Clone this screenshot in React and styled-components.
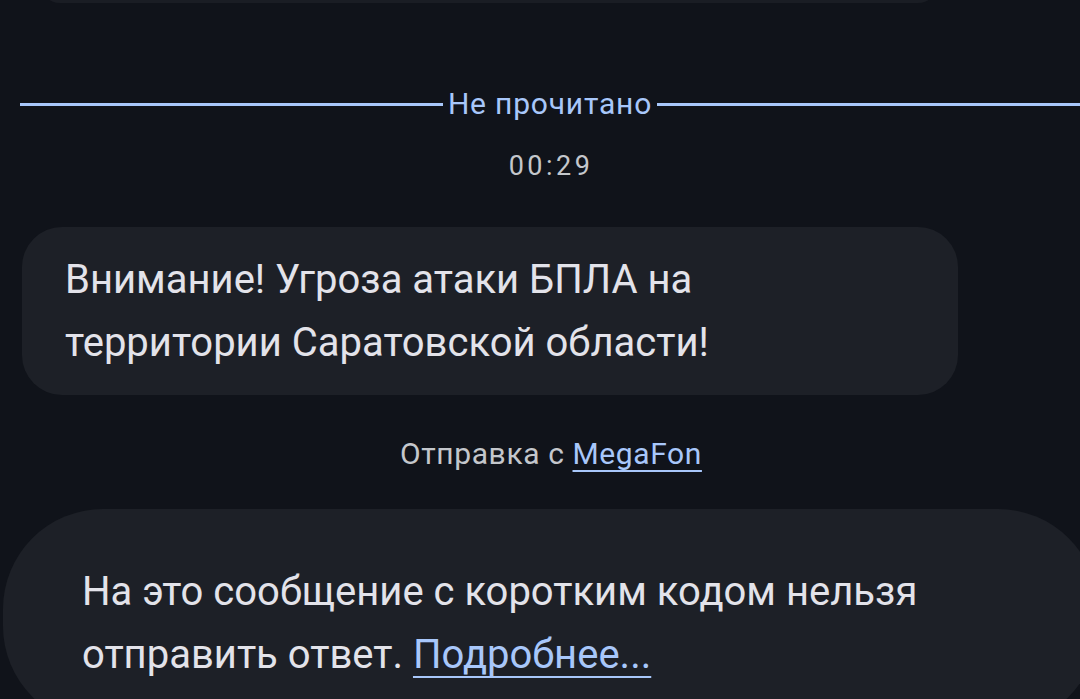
import React from "react";
import styled, { createGlobalStyle } from "styled-components";

const Global = createGlobalStyle`
  html, body {
    margin: 0;
    padding: 0;
    background: #10131a;
    overflow: hidden;
  }
  body {
    width: 1080px;
    height: 699px;
    font-family: Roboto, "Noto Sans", "Liberation Sans", sans-serif;
  }
`;

const Page = styled.div`
  width: 1080px;
  height: 699px;
  display: flex;
  flex-direction: column;
  overflow: hidden;
  background: #10131a;
`;

const PrevBubble = styled.div`
  flex: none;
  margin: -37px 0 0 40px;
  width: 898px;
  height: 40px;
  border-radius: 38px;
  background: #1a1d24;
`;

const Divider = styled.div`
  display: flex;
  align-items: center;
  gap: 5px;
  margin-top: 85px;
  padding-left: 20px;
  height: 32px;
`;

const Rule = styled.div`
  flex: 1;
  height: 3px;
  background: #a8c7fa;
`;

const DividerLabel = styled.span`
  font-size: 30px;
  line-height: 32px;
  letter-spacing: 0.8px;
  color: #a8c7fa;
  white-space: nowrap;
`;

const Stamp = styled.div`
  margin-top: 31px;
  padding-left: 22px;
  text-align: center;
  font-size: 27px;
  line-height: 30px;
  letter-spacing: 3.5px;
  color: #c4c7cc;
`;

const Bubble = styled.div`
  flex: none;
  box-sizing: border-box;
  margin-left: ${(p) => p.$left}px;
  margin-top: ${(p) => p.$top}px;
  width: ${(p) => p.$width}px;
  padding: ${(p) => p.$pad};
  border-radius: ${(p) => p.$radius}px;
  background: #1d2027;
  color: #e3e3ea;
  font-size: 40px;
  line-height: 63px;
`;

const Sender = styled.div`
  margin-top: 43px;
  padding-left: 22px;
  text-align: center;
  font-size: 30px;
  line-height: 32px;
  letter-spacing: 0.6px;
  color: #c4c7cc;
`;

const Link = styled.a`
  color: #a8c7fa;
  text-decoration: underline;
  text-decoration-thickness: 2px;
  text-underline-offset: ${(p) => p.$offset}px;
`;

export default function App() {
  return (
    <>
      <Global />
      <Page>
        <PrevBubble />
        <Divider>
          <Rule />
          <DividerLabel>Не прочитано</DividerLabel>
          <Rule />
        </Divider>
        <Stamp>00:29</Stamp>
        <Bubble $left={22} $top={46} $width={936} $radius={40} $pad="21px 40px 21px 43px">
          Внимание! Угроза атаки БПЛА на
          <br />
          территории Саратовской области!
        </Bubble>
        <Sender>
          Отправка с <Link $offset={6}>MegaFon</Link>
        </Sender>
        <Bubble $left={3} $top={39} $width={1095} $radius={100} $pad="51px 60px 40px 79px">
          На это сообщение с коротким кодом нельзя
          <br />
          отправить ответ. <Link $offset={8}>Подробнее...</Link>
        </Bubble>
      </Page>
    </>
  );
}
